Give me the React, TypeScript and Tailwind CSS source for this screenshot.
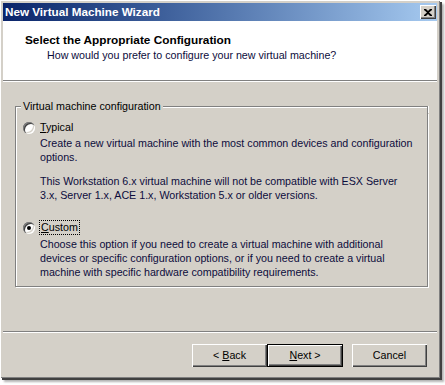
import React from 'react'

const Radio = ({ checked }: { checked: boolean }) => (
  <span className="relative inline-block w-[12px] h-[12px] rounded-full bg-white shrink-0 shadow-[inset_1px_1px_0_#808080,inset_2px_2px_0_#404040,inset_-1px_-1px_0_#ffffff,inset_-2px_-2px_0_#d4d0c8]">
    {checked && <span className="absolute left-[4px] top-[4px] w-[4px] h-[4px] rounded-full bg-black" />}
  </span>
)

const Btn = ({ children, isDefault }: { children: React.ReactNode; isDefault?: boolean }) => (
  <button
    className={`h-[23px] bg-[#d4d0c8] text-[10.7px] text-black leading-none flex items-center justify-center ${
      isDefault
        ? 'w-[76px] border border-black shadow-[inset_1px_1px_0_#ffffff,inset_-1px_-1px_0_#404040,inset_-2px_-2px_0_#808080]'
        : 'w-[75px] shadow-[inset_1px_1px_0_#ffffff,inset_-1px_-1px_0_#404040,inset_-2px_-2px_0_#808080]'
    }`}
  >
    {children}
  </button>
)

export default function App() {
  return (
    <div className="w-[445px] h-[385px] bg-white font-['Liberation_Sans',Arial,sans-serif] text-[10.7px] text-black">
      <div className="w-[440px] h-[378px] bg-[#d4d0c8] p-[3px] flex flex-col shadow-[inset_1px_1px_0_#ffffff,inset_-1px_-1px_0_#808080,2px_2px_0_#404040,4px_4px_2px_rgba(0,0,0,0.3)]">
        {/* title bar */}
        <div className="h-[18px] flex items-center justify-between pl-[2px] pr-[1px] bg-gradient-to-r from-[#0a246a] to-[#a6caf0]">
          <span className="text-white font-bold text-[11.7px] leading-none">New Virtual Machine Wizard</span>
          <span className="w-[16px] h-[14px] bg-[#d4d0c8] flex items-center justify-center shadow-[inset_1px_1px_0_#ffffff,inset_-1px_-1px_0_#404040,inset_-2px_-2px_0_#808080]">
            <svg width="8" height="7" viewBox="0 0 8 7">
              <path d="M0 0h2l2 2 2-2h2v1L5 3.5 8 6v1H6L4 5 2 7H0V6l3-2.5L0 1z" fill="#000" />
            </svg>
          </span>
        </div>

        {/* header */}
        <div className="h-[59px] bg-white pt-[12px] pl-[22px] leading-[14px]">
          <div className="font-bold text-[11.8px]">Select the Appropriate Configuration</div>
          <div className="pl-[22px] mt-[1px] text-[#0c0c3c]">How would you prefer to configure your new virtual machine?</div>
        </div>
        <div className="h-[2px] border-t border-[#808080] bg-white" />

        {/* group box */}
        <div className="ml-[12px] mt-[18px] w-[413px] leading-[14px]">
          <div className="flex h-[13px] leading-[13px]">
            <div className="w-[6px] h-[7px] self-end border-t border-l border-[#808080] shadow-[inset_1px_1px_0_#ffffff]" />
            <span className="px-[2px]">Virtual machine configuration</span>
            <div className="flex-1 h-[7px] self-end border-t border-r border-[#808080] shadow-[inset_0_1px_0_#ffffff,1px_0_0_#ffffff]" />
          </div>
          <div className="border-l border-r border-b border-[#808080] shadow-[inset_1px_0_0_#ffffff,1px_1px_0_#ffffff] pl-[7px] pt-[8px] pb-[7px]">
            <div className="flex items-center gap-[5px] h-[13px] leading-[13px]">
              <Radio checked={false} />
              <span><span className="underline">T</span>ypical</span>
            </div>
            <div className="ml-[17px] mt-[2px] text-[#0c0c3c]">
              Create a new virtual machine with the most common devices and configuration
              <br />
              options.
            </div>
            <div className="ml-[17px] mt-[10px] text-[#0c0c3c]">
              This Workstation 6.x virtual machine will not be compatible with ESX Server
              <br />
              3.x, Server 1.x, ACE 1.x, Workstation 5.x or older versions.
            </div>
            <div className="flex items-center gap-[4px] mt-[18px] h-[15px] leading-[13px]">
              <Radio checked />
              <span className="border border-dotted border-black px-[1px]">
                <span className="underline">C</span>ustom
              </span>
            </div>
            <div className="ml-[17px] mt-[2px] text-[#0c0c3c]">
              Choose this option if you need to create a virtual machine with additional
              <br />
              devices or specific configuration options, or if you need to create a virtual
              <br />
              machine with specific hardware compatibility requirements.
            </div>
          </div>
        </div>

        <div className="flex-1" />
        <div className="h-[2px] border-t border-[#808080] bg-white" />
        <div className="flex justify-end pr-[10px] mt-[11px] mb-[8px]">
          <Btn>
            &lt; <span className="underline ml-[3px]">B</span>ack
          </Btn>
          <Btn isDefault>
            <span className="underline">N</span>ext &gt;
          </Btn>
          <span className="w-[9px]" />
          <Btn>Cancel</Btn>
        </div>
      </div>
    </div>
  )
}
